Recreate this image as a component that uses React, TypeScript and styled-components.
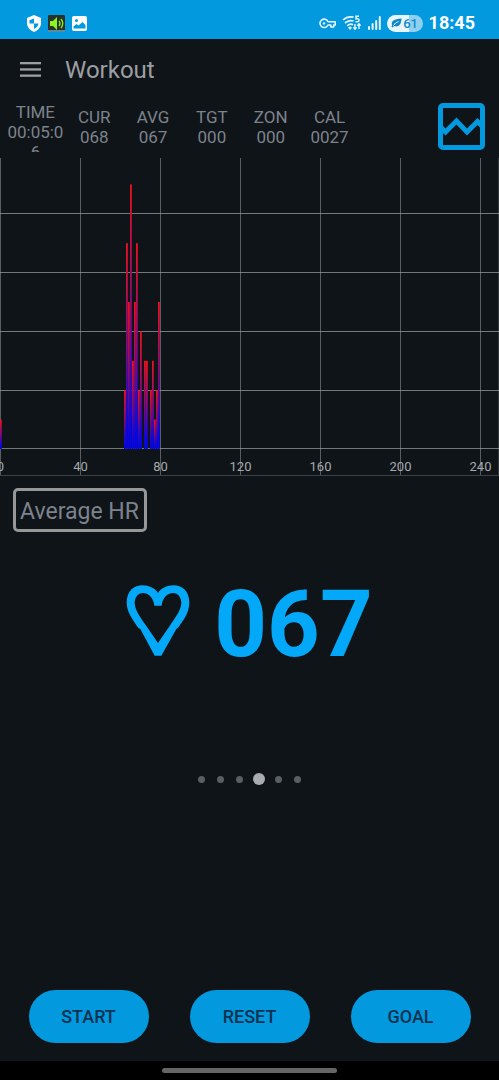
import React from "react";
import styled, { createGlobalStyle } from "styled-components";

const accent = "#0299df";
const ink = "#0f1418";
const muted = "#7d838c";
const soft = "#9c9fa2";

const GlobalStyle = createGlobalStyle`
  * { box-sizing: border-box; }
  body { margin: 0; background: ${ink}; font-family: Roboto, "Liberation Sans", sans-serif; }
  button { font-family: inherit; }
`;

const Screen = styled.div`
  display: flex;
  flex-direction: column;
  min-height: 100vh;
  background: ${ink};
`;

const StatusBar = styled.div`
  display: flex;
  justify-content: space-between;
  align-items: center;
  height: 39px;
  padding: 7px 24px 0 27px;
  background: ${accent};
  color: #fff;
`;

const IconGroup = styled.div<{ $gap: number }>`
  display: flex;
  align-items: center;
  gap: ${(p) => p.$gap}px;
  svg { display: block; }
`;

const Battery = styled.span`
  display: flex;
  align-items: center;
  justify-content: center;
  gap: 1px;
  width: 36px;
  height: 17px;
  border-radius: 9px;
  background: linear-gradient(90deg, #e6f7ff 61%, #8fd0f2 61%);
  color: #1488c6;
  font-size: 13px;
  line-height: 17px;
  font-weight: 500;
`;

const Clock = styled.span`
  font-size: 18px;
  line-height: 20px;
  font-weight: 700;
`;

const AppBar = styled.header`
  display: flex;
  align-items: center;
  gap: 24px;
  height: 63px;
  padding: 0 20px 2px;
`;

const MenuButton = styled.button`
  padding: 0;
  border: 0;
  background: none;
  cursor: pointer;
  svg { display: block; }
`;

const Title = styled.h1`
  margin: 0;
  color: ${soft};
  font-size: 24px;
  line-height: 28px;
  font-weight: 400;
`;

const StatsRow = styled.section`
  display: flex;
  justify-content: space-between;
  align-items: flex-start;
  padding: 0 14px 0 6px;
  margin-bottom: 6px;
`;

const Stats = styled.div`
  display: grid;
  grid-template-columns: repeat(6, 1fr);
  grid-template-rows: 50px;
  flex: 0 1 353px;
  overflow: hidden;
  align-items: safe center;
`;

const Stat = styled.div`
  color: ${muted};
  font-size: 17px;
  line-height: 20px;
  text-align: center;
  word-break: break-all;
`;

const ChartButton = styled(MenuButton)`
  margin-top: 1px;
`;

const ChartSvg = styled.svg`
  display: block;
  width: 100%;
  height: 318px;
`;

const AxisLabel = styled.text`
  fill: #a6a9ac;
  font-size: 13px;
  text-anchor: middle;
`;

const MetricButton = styled.button`
  align-self: flex-start;
  height: 44px;
  margin: 12px 0 0 13px;
  padding: 4px 5px 0 4px;
  border: 3px solid #969898;
  border-radius: 5px;
  background: none;
  color: ${muted};
  font-size: 23px;
  line-height: 28px;
  cursor: pointer;
`;

const Reading = styled.main`
  display: flex;
  justify-content: center;
  align-items: baseline;
  gap: 24px;
  padding-top: 37px;
  color: #03a9f8;
`;

const ReadingValue = styled.span`
  font-size: 92px;
  line-height: 112px;
  font-weight: 700;
`;

const Pager = styled.div`
  display: grid;
  grid-template-columns: repeat(6, 1fr);
  place-items: center;
  align-self: center;
  width: 116px;
  height: 14px;
  margin-top: 91px;
`;

const Dot = styled.button<{ $active: boolean }>`
  width: ${(p) => (p.$active ? 12 : 7)}px;
  height: ${(p) => (p.$active ? 12 : 7)}px;
  padding: 0;
  border: 0;
  border-radius: 50%;
  background: ${(p) => (p.$active ? "#a9adb0" : "#5b5f63")};
`;

const Actions = styled.div`
  display: grid;
  grid-template-columns: repeat(3, 1fr);
  justify-items: center;
  margin-top: auto;
  padding: 24px 8px 18px;
`;

const ActionButton = styled.button`
  width: 120px;
  height: 53px;
  border: 0;
  border-radius: 27px;
  background: ${accent};
  color: #0b3350;
  font-size: 18px;
  line-height: 20px;
  font-weight: 500;
  cursor: pointer;
`;

const NavBar = styled.div`
  display: flex;
  justify-content: center;
  align-items: center;
  height: 19px;
  background: #000;
`;

const NavHandle = styled.span`
  width: 35%;
  height: 5px;
  border-radius: 3px;
  background: #666;
`;

const ShieldIcon = () => (
  <svg width="14" height="17" viewBox="0 0 14 17" aria-hidden="true">
    <path d="M7 0 14 3v5c0 4-3 7.500-7 9-4-1.500-7-5-7-9V3z" fill="#fff" />
    <path d="M7 3.500V8.500H2.500V5.300zM7 8.500h4.500c-.3 2.400-2 4.300-4.500 5.500z" fill={accent} />
  </svg>
);

const SpeakerIcon = () => (
  <svg width="17" height="17" viewBox="0 0 17 17" aria-hidden="true">
    <rect width="17" height="17" rx="1" fill="#26322b" />
    <rect y="15" width="17" height="2" fill="#5b8a9c" />
    <path d="M2 6h3l4-4v13l-4-4H2z" fill="#8cf520" />
    <path d="M11 6q2 2.500 0 5M13 4q3.500 4.500 0 9" fill="none" stroke="#8cf520" strokeWidth="1.300" />
  </svg>
);

const PictureIcon = () => (
  <svg width="15" height="15" viewBox="0 0 15 15" aria-hidden="true">
    <rect width="15" height="15" rx="2" fill="#fff" />
    <circle cx="4.500" cy="4.500" r="1.500" fill={accent} />
    <path d="M1.500 12.500V10.500L4.500 8l2 1.500L10.500 6l3 3v3.500z" fill={accent} />
  </svg>
);

const KeyIcon = () => (
  <svg width="17" height="11" viewBox="0 0 17 11" fill="none" stroke="#e8f7ff" strokeWidth="1.600" aria-hidden="true">
    <path d="M9 3.700H16.200V7H14.700V9H11.800V7H9A4.200 4.200 0 1 1 9 3.700Z" strokeLinejoin="round" />
    <circle cx="5" cy="5.400" r="1.200" fill="#e8f7ff" stroke="none" />
  </svg>
);

const WifiIcon = () => (
  <svg width="20" height="16" viewBox="0 0 20 16" fill="none" stroke="#e8f7ff" strokeWidth="1.700" aria-hidden="true">
    <path d="M1 5Q5.500 .8 11.500 2.200M3 8Q7 4.500 11.500 6M5.200 10.800Q8 8.300 11 9.800" />
    <path d="M6 12.700 8 11.300 10 12.700 8 15z" fill="#e8f7ff" stroke="none" />
    <path d="M17 1.200H14V3.800Q17 3.200 17 5.200T13.500 6.800" strokeWidth="1.500" />
    <path d="M13 9v5M11.300 12.400 13 14.300 14.700 12.400M17 14V9M15.300 10.600 17 8.700 18.700 10.600" strokeWidth="1.400" />
  </svg>
);

const SignalIcon = () => (
  <svg width="13" height="14" viewBox="0 0 13 14" fill="#e8f7ff" aria-hidden="true">
    <rect x="0" y="10" width="2" height="4" rx="1" />
    <rect x="3.600" y="7" width="2" height="7" rx="1" />
    <rect x="7.200" y="4" width="2" height="10" rx="1" />
    <rect x="10.800" y="0" width="2" height="14" rx="1" />
  </svg>
);

const LeafIcon = () => (
  <svg width="11" height="10" viewBox="0 0 11 10" aria-hidden="true">
    <path d="M1 7C0 3 3 1 10.500 0.500 10.500 7 7 9.500 3 8L1.500 9.500.5 8.800z" fill="#1488c6" />
    <path d="M2.500 7.500Q4 4.500 7.500 3.500" fill="none" stroke="#e6f7ff" />
  </svg>
);

const HeartIcon = () => (
  <svg width="64" height="71" viewBox="52 46 190 213" aria-hidden="true">
    <path
      fill="currentColor"
      fillRule="evenodd"
      d="M147 70C130 40 53 30 53 100C54 130 72 150 88 175L94 178L137 258H157L202 178L207 174C225 150 240 130 241 100C241 30 164 40 147 70ZM136 108H158C162 62 216 55 217 100C216 125 195 148 184 166L147 220L110 166C98 148 78 125 77 100C78 55 132 62 136 108Z"
    />
  </svg>
);

// Sample counts per heart rate value (bpm).
const histogram: [number, number][] = [
  [0, 1], [62, 2], [63, 7], [64, 5], [65, 9], [66, 3], [67, 5], [68, 7], [69, 2],
  [70, 4], [72, 3], [73, 3], [75, 2], [76, 3], [77, 1], [78, 2], [79, 5],
];
const BASE = 291;
const ticks = [0, 40, 80, 120, 160, 200, 240];

const Histogram = () => (
  <ChartSvg role="img" aria-label="Heart rate histogram">
    <defs>
      <linearGradient id="bar" x1="0" y1="0" x2="0" y2="1">
        <stop offset="0" stopColor="#f0101c" />
        <stop offset="0.500" stopColor="#800a80" />
        <stop offset="0.900" stopColor="#0a05ee" />
        <stop offset="1" stopColor="#0505e6" />
      </linearGradient>
    </defs>
    <g stroke="#95999c" strokeOpacity="0.550">
      {ticks.map((t) => (
        <line key={t} x1={t * 2 + 0.5} x2={t * 2 + 0.5} y1="0" y2="317" />
      ))}
      <line x1="100%" x2="100%" y1="0" y2="317" />
      {[55.5, 114.5, 173.5, 232.5, 290.5].map((y) => (
        <line key={y} x1="0" x2="100%" y1={y} y2={y} strokeOpacity="0.750" />
      ))}
      <line x1="0" x2="100%" y1="317.500" y2="317.500" strokeOpacity="0.350" />
    </g>
    {histogram.map(([bpm, n]) => (
      <rect key={bpm} x={bpm * 2} y={BASE - n * 29.4} width="1.800" height={n * 29.4} fill="url(#bar)" />
    ))}
    {ticks.map((t) => (
      <AxisLabel key={t} x={t * 2 + 0.5} y="313">{t}</AxisLabel>
    ))}
  </ChartSvg>
);

const stats = [
  ["TIME", "00:05:06"], ["CUR", "068"], ["AVG", "067"],
  ["TGT", "000"], ["ZON", "000"], ["CAL", "0027"],
];

export default function App() {
  return (
    <Screen>
      <GlobalStyle />
      <StatusBar>
        <IconGroup $gap={7}>
          <ShieldIcon />
          <SpeakerIcon />
          <PictureIcon />
        </IconGroup>
        <IconGroup $gap={6}>
          <KeyIcon />
          <WifiIcon />
          <SignalIcon />
          <Battery><LeafIcon />61</Battery>
          <Clock>18:45</Clock>
        </IconGroup>
      </StatusBar>
      <AppBar>
        <MenuButton aria-label="Menu">
          <svg width="21" height="15" viewBox="0 0 21 15" fill={soft}>
            <rect y="0" width="21" height="2.300" />
            <rect y="6.300" width="21" height="2.300" />
            <rect y="12.500" width="21" height="2.300" />
          </svg>
        </MenuButton>
        <Title>Workout</Title>
      </AppBar>
      <StatsRow>
        <Stats>
          {stats.map(([label, value]) => (
            <Stat key={label}>
              <div>{label}</div>
              <div>{value}</div>
            </Stat>
          ))}
        </Stats>
        <ChartButton aria-label="Chart">
          <svg width="47" height="47" viewBox="0 0 47 47" fill="none" stroke={accent} strokeWidth="5">
            <rect x="2.500" y="2.500" width="42" height="42" rx="2.500" />
            <path d="M3 24.500 7.500 29 18.500 18 29 29 39.500 18.500 44 23" />
          </svg>
        </ChartButton>
      </StatsRow>
      <Histogram />
      <MetricButton>Average HR</MetricButton>
      <Reading>
        <HeartIcon />
        <ReadingValue>067</ReadingValue>
      </Reading>
      <Pager>
        {[0, 1, 2, 3, 4, 5].map((i) => (
          <Dot key={i} $active={i === 3} aria-label={`Page ${i + 1}`} />
        ))}
      </Pager>
      <Actions>
        <ActionButton>START</ActionButton>
        <ActionButton>RESET</ActionButton>
        <ActionButton>GOAL</ActionButton>
      </Actions>
      <NavBar><NavHandle /></NavBar>
    </Screen>
  );
}
